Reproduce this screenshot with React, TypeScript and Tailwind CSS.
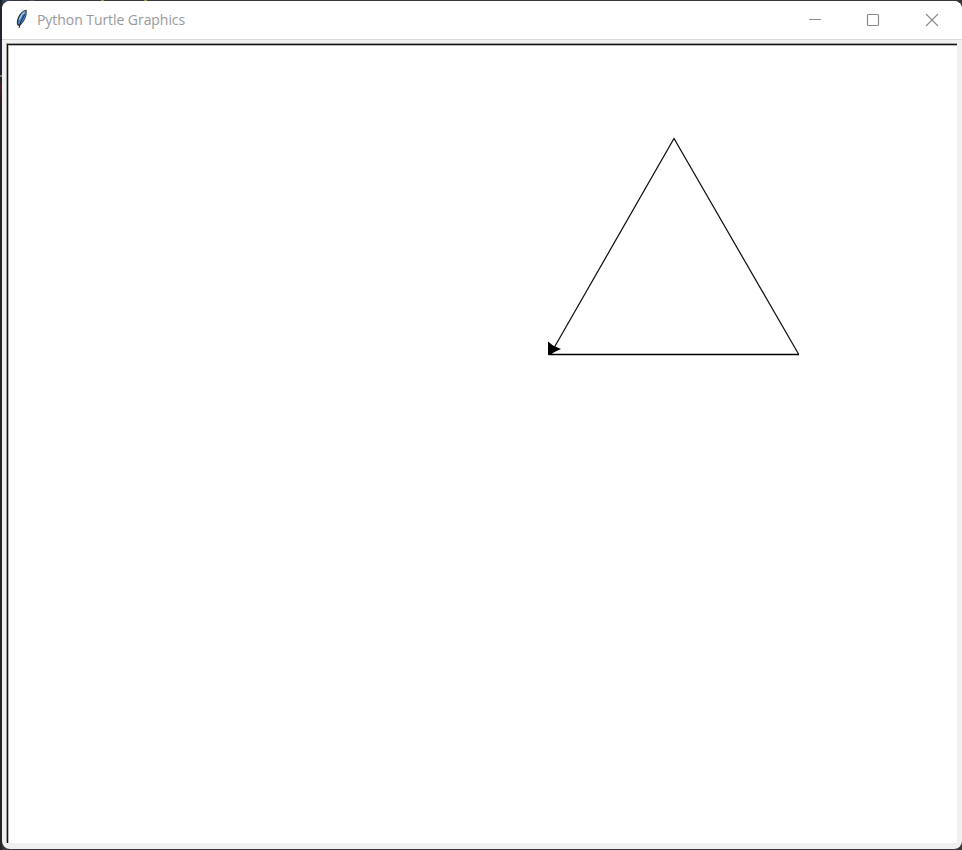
function Feather() {
  return (
    <svg width="14" height="22" viewBox="0 0 14 22" className="shrink-0">
      <path d="M11.6 .8C8.3 1 4.4 4.6 2.8 8.8C1.7 11.5 1.5 14.6 2.3 16.2L4.2 17.2C8.6 14.2 12.6 8 11.6 .8Z" fill="#2c3642" />
      <path d="M10.8 1.9C8 2.6 5 6.2 3.8 9.7C3 12.3 2.8 13.8 3.2 15L4.6 15.7C8.3 12.6 11.6 7.6 10.8 1.9Z" fill="#4481c2" />
      <path d="M9.7 2.8C7.3 4.5 5.3 7.5 4.3 10.8" fill="none" stroke="#9fc6ea" strokeWidth="1.2" />
      <path d="M9.6 5.5C7.3 9.5 5 13.3 4.1 19" fill="none" stroke="#1c2733" strokeWidth="1" />
    </svg>
  );
}

function WindowControls() {
  return (
    <div className="flex h-full items-center text-[#8b8b8b]">
      <div className="flex w-[58px] justify-center">
        <svg width="14" height="14" viewBox="0 0 14 14"><path d="M1 6.5H13" stroke="currentColor" /></svg>
      </div>
      <div className="flex w-[58px] justify-center">
        <svg width="14" height="14" viewBox="0 0 14 14"><rect x="1.5" y="1.5" width="11" height="11" rx="1" fill="none" stroke="currentColor" strokeWidth="1.2" /></svg>
      </div>
      <div className="flex w-[60px] justify-center">
        <svg width="14" height="14" viewBox="0 0 14 14"><path d="M1 1L13 13M13 1L1 13" stroke="currentColor" strokeWidth="1.1" /></svg>
      </div>
    </div>
  );
}

export default function App() {
  return (
    <div className="h-[850px] w-[962px] overflow-hidden bg-[#383638] bg-[linear-gradient(#20252d_0_75px,#77777a_75px_77px,#28262b_77px_80px,#4b2024_86px,#292025_101px,#252429_110px),linear-gradient(90deg,#34465c_0_10px,#383638_10px_30px,#3c5c80_30px_34px,#383638_34px_101px,#9a9440_101px_104px,#383638_104px_144px,#9a9440_144px_147px,#383638_147px)] bg-[length:2px_850px,962px_2px] bg-no-repeat pt-px pb-px pl-[2px]">
      <div className="flex h-[848px] w-[960px] flex-col overflow-hidden rounded-[8px] bg-[#f0f0f0]">
        <header className="flex h-[39px] shrink-0 items-center justify-between border-b border-[#d9d9d9] bg-white">
          <div className="flex items-center pl-[13px]">
            <Feather />
            <h1 className="ml-[8px] w-[150px] whitespace-nowrap font-['Open_Sans','Noto_Sans',sans-serif] text-[14px] leading-5 tracking-[-0.06px] text-[#999999]">Python Turtle Graphics</h1>
          </div>
          <WindowControls />
        </header>
        <main className="mt-[3px] mr-[5px] mb-[6px] ml-[4px] min-h-0 flex-1 border-t border-l border-[#a0a0a0]">
          <div className="h-full border-t border-l border-[#111111] bg-white">
            <div className="h-full border-t border-l border-[#b8b8b8]">
              <svg width="948" height="797" viewBox="9 46 948 797" className="block">
                <path d="M550.5 354L674 138.5L798.5 354" fill="none" stroke="#111111" strokeWidth="1.25" />
                <path d="M549 354.5H799" stroke="black" strokeWidth="1.3" />
                <path d="M548 341.5L553 345.5L561 349L554.5 352L550 355H548Z" fill="black" />
              </svg>
            </div>
          </div>
        </main>
      </div>
    </div>
  );
}
